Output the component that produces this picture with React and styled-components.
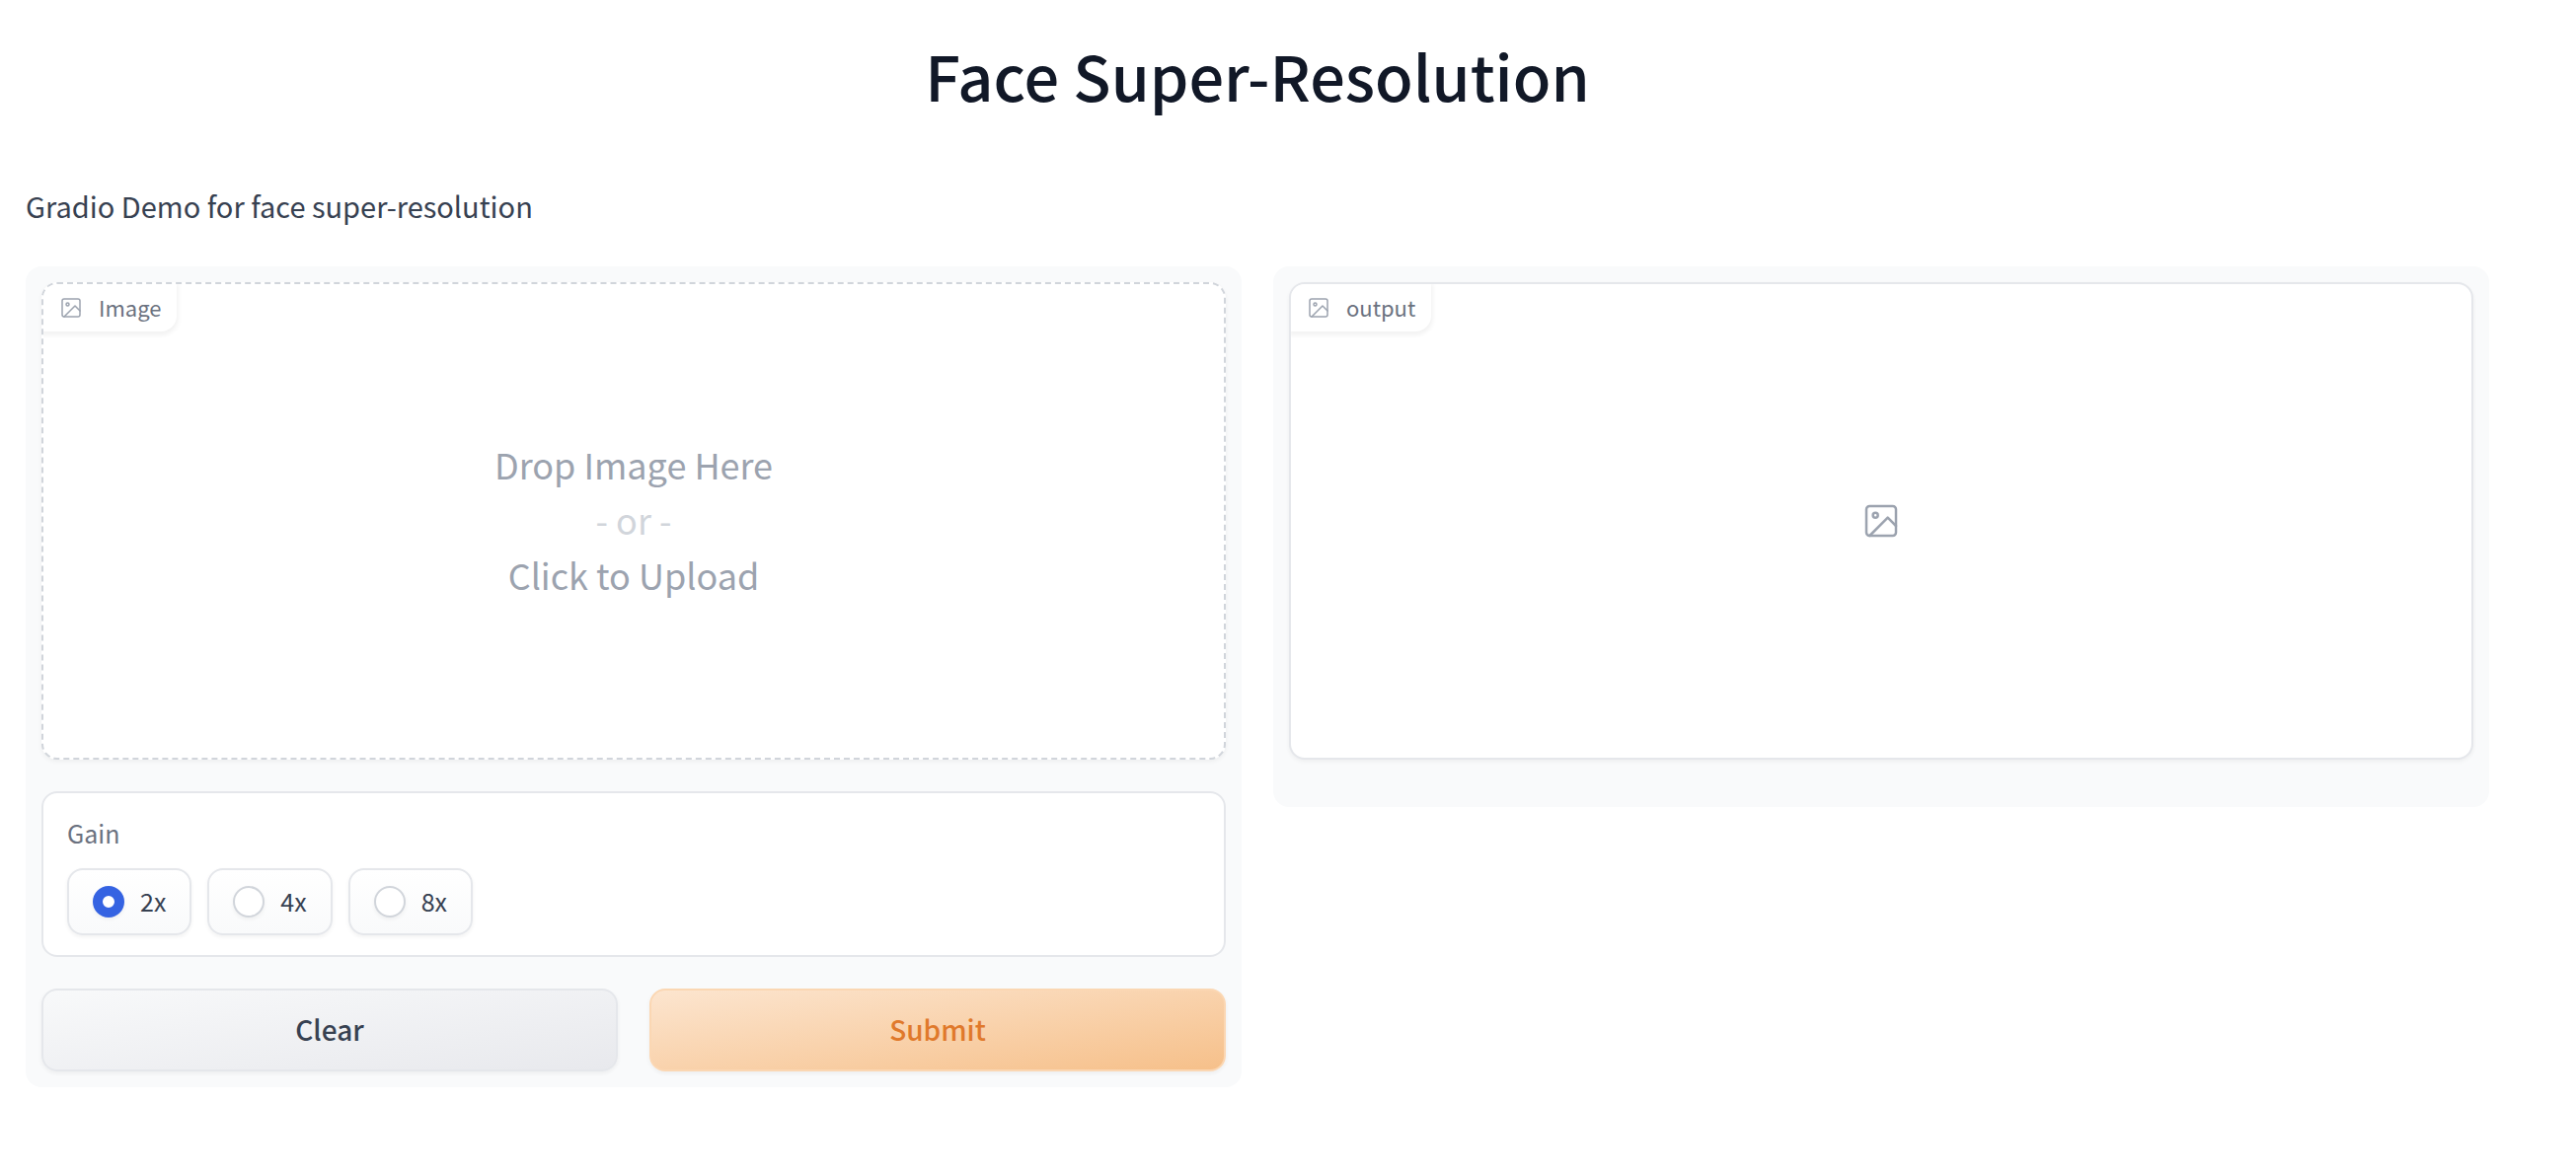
import React, { useState } from "react";
import styled, { createGlobalStyle } from "styled-components";

const GlobalStyle = createGlobalStyle`
  *, *::before, *::after { box-sizing: border-box; }
  body {
    margin: 0;
    background: #ffffff;
    color: #374151;
    font-family: "Noto Sans CJK SC", "Noto Sans", sans-serif;
    font-size: 29px;
    line-height: 48px;
  }
  button, input { font: inherit; margin: 0; }
`;

const Page = styled.main`
  display: flex;
  flex-direction: column;
  padding: 36px 88px 88px 26px;
`;

const Title = styled.h1`
  margin: 0 0 68px;
  color: #111827;
  font-size: 63px;
  line-height: 80px;
  font-weight: 500;
  text-align: center;
`;

const Description = styled.p`
  margin: 0 0 38px;
`;

const Columns = styled.div`
  display: flex;
  align-items: flex-start;
  gap: 32px;
`;

const Panel = styled.section`
  flex: 1;
  min-width: 0;
  display: flex;
  flex-direction: column;
  gap: 32px;
  padding: 16px 16px ${(p) => (p.$tall ? "48px" : "16px")};
  border-radius: 16px;
  background: #f9fafb;
`;

const Block = styled.div`
  position: relative;
  display: flex;
  min-height: 484px;
  border: 2px ${(p) => (p.$dashed ? "dashed #d1d5db" : "solid #e5e7eb")};
  border-radius: 16px;
  background: #ffffff;
  box-shadow: 0 2px 4px rgba(0, 0, 0, 0.05);
  overflow: hidden;
`;

const BlockLabel = styled.div`
  position: absolute;
  top: 0;
  left: 0;
  display: flex;
  align-items: center;
  gap: 16px;
  height: 48px;
  padding: 0 16px;
  border-bottom-right-radius: 16px;
  background: #ffffff;
  color: #6b7280;
  font-size: 22px;
  box-shadow: 0 2px 4px 2px rgba(0, 0, 0, 0.05);
`;

const Caption = styled.span`
  padding-bottom: 2px;
`;

const Icon = styled.svg`
  flex: none;
  width: ${(p) => p.$size}px;
  height: ${(p) => p.$size}px;
  color: #9ca3af;
`;

const DropZone = styled.button`
  flex: 1;
  display: flex;
  flex-direction: column;
  align-items: center;
  justify-content: center;
  padding: 0 0 4px;
  border: 0;
  background: transparent;
  color: #9ca3af;
  font-size: 36px;
  line-height: 56px;
  cursor: pointer;
`;

const Faint = styled.span`
  color: #d1d5db;
`;

const Empty = styled.div`
  flex: 1;
  display: flex;
  align-items: center;
  justify-content: center;
`;

const Field = styled.fieldset`
  display: flex;
  flex-direction: column;
  gap: 16px;
  min-width: 0;
  margin: 0;
  padding: 20px 24px;
  border: 2px solid #e5e7eb;
  border-radius: 16px;
  background: #ffffff;
`;

const FieldName = styled.span`
  color: #6b7280;
  font-size: 25px;
  line-height: 40px;
`;

const Options = styled.div`
  display: flex;
  flex-wrap: wrap;
  gap: 16px;
`;

const Option = styled.label`
  display: flex;
  align-items: center;
  gap: 16px;
  height: 68px;
  padding: 0 24px;
  border: 2px solid #e5e7eb;
  border-radius: 16px;
  background: linear-gradient(to bottom, #ffffff, #f9fafb);
  box-shadow: 0 2px 4px rgba(0, 0, 0, 0.05);
  font-size: 25px;
  cursor: pointer;
`;

const Radio = styled.input`
  appearance: none;
  width: 32px;
  height: 32px;
  border: 2px solid #d1d5db;
  border-radius: 50%;
  background: #ffffff;
  box-shadow: 0 2px 4px rgba(0, 0, 0, 0.05);

  &:checked {
    border: 10px solid #3563e2;
  }
`;

const Actions = styled.div`
  display: flex;
  gap: 32px;
`;

const Button = styled.button`
  flex: 1;
  height: 84px;
  padding: 0 32px 2px;
  border: 2px solid ${(p) => (p.$primary ? "#fbd7b3" : "#e5e7eb")};
  border-radius: 16px;
  background: ${(p) =>
    p.$primary
      ? "linear-gradient(to bottom right, #fce5cf, #f6c08a)"
      : "linear-gradient(to bottom right, #f8f9fa, #e8e9ed)"};
  color: ${(p) => (p.$primary ? "#e0792b" : "#374151")};
  font-size: 28px;
  font-weight: 500;
  box-shadow: 0 2px 4px rgba(0, 0, 0, 0.05);
  cursor: pointer;
`;

function ImageIcon({ size }) {
  return (
    <Icon
      $size={size}
      viewBox="0 0 24 24"
      fill="none"
      stroke="currentColor"
      strokeWidth="1.5"
      strokeLinecap="round"
      strokeLinejoin="round"
      aria-hidden="true"
    >
      <rect x="3" y="3" width="18" height="18" rx="2" ry="2" />
      <circle cx="8.5" cy="8.5" r="1.5" />
      <polyline points="21 15 16 10 5 21" />
    </Icon>
  );
}

const GAINS = ["2x", "4x", "8x"];

export default function App() {
  const [gain, setGain] = useState("2x");
  return (
    <>
      <GlobalStyle />
      <Page>
        <Title>Face Super-Resolution</Title>
        <Description>Gradio Demo for face super-resolution</Description>
        <Columns>
          <Panel>
            <Block $dashed>
              <BlockLabel>
                <ImageIcon size={24} />
                <Caption>Image</Caption>
              </BlockLabel>
              <DropZone type="button">
                <span>Drop Image Here</span>
                <Faint>- or -</Faint>
                <span>Click to Upload</span>
              </DropZone>
            </Block>
            <Field aria-labelledby="gain-name">
              <FieldName id="gain-name">Gain</FieldName>
              <Options>
                {GAINS.map((value) => (
                  <Option key={value}>
                    <Radio
                      type="radio"
                      name="gain"
                      value={value}
                      checked={gain === value}
                      onChange={() => setGain(value)}
                    />
                    <Caption>{value}</Caption>
                  </Option>
                ))}
              </Options>
            </Field>
            <Actions>
              <Button type="button" onClick={() => setGain("2x")}>
                Clear
              </Button>
              <Button type="button" $primary>
                Submit
              </Button>
            </Actions>
          </Panel>
          <Panel $tall>
            <Block>
              <BlockLabel>
                <ImageIcon size={24} />
                <Caption>output</Caption>
              </BlockLabel>
              <Empty>
                <ImageIcon size={40} />
              </Empty>
            </Block>
          </Panel>
        </Columns>
      </Page>
    </>
  );
}
